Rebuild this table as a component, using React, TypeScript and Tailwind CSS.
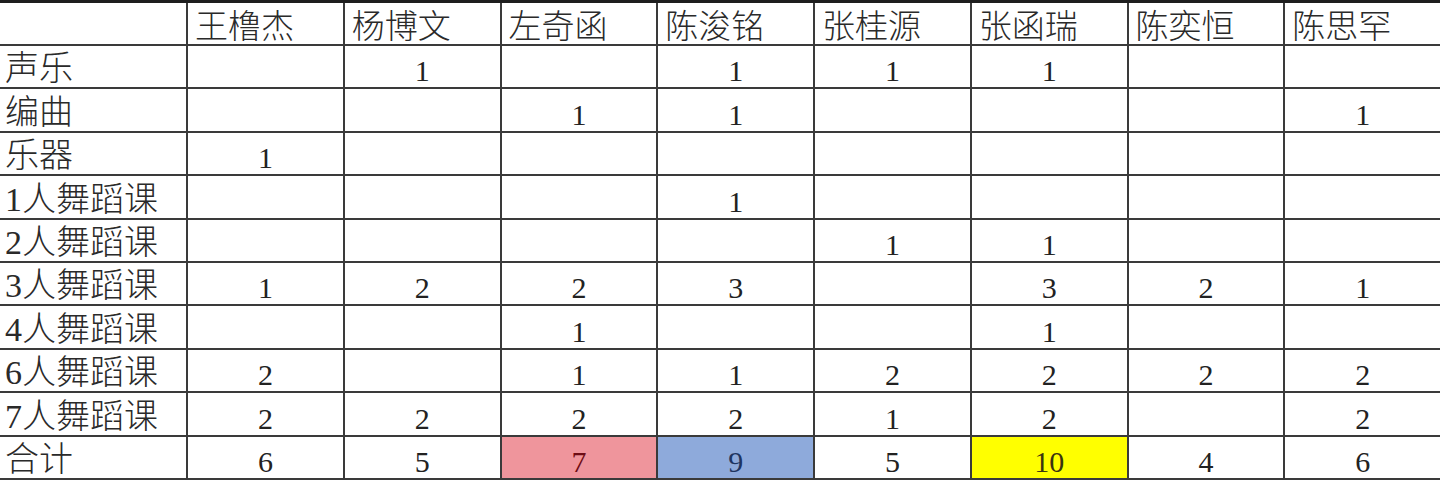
const names = ['王橹杰', '杨博文', '左奇函', '陈浚铭', '张桂源', '张函瑞', '陈奕恒', '陈思罕'];

type Row = { label: string; values: (number | null)[] };

const rows: Row[] = [
  { label: '声乐', values: [null, 1, null, 1, 1, 1, null, null] },
  { label: '编曲', values: [null, null, 1, 1, null, null, null, 1] },
  { label: '乐器', values: [1, null, null, null, null, null, null, null] },
  { label: '1人舞蹈课', values: [null, null, null, 1, null, null, null, null] },
  { label: '2人舞蹈课', values: [null, null, null, null, 1, 1, null, null] },
  { label: '3人舞蹈课', values: [1, 2, 2, 3, null, 3, 2, 1] },
  { label: '4人舞蹈课', values: [null, null, 1, null, null, 1, null, null] },
  { label: '6人舞蹈课', values: [2, null, 1, 1, 2, 2, 2, 2] },
  { label: '7人舞蹈课', values: [2, 2, 2, 2, 1, 2, null, 2] },
];

const totals = [6, 5, 7, 9, 5, 10, 4, 6];

// highlighted totals
const totalStyles = [
  'bg-white text-[#222]',
  'bg-white text-[#222]',
  'bg-[#ef959c] text-[#6e0c14]',
  'bg-[#8eaadb] text-[#1f3560]',
  'bg-white text-[#222]',
  'bg-[#ffff00] text-[#3a3410]',
  'bg-white text-[#222]',
  'bg-white text-[#222]',
];

const font = "font-['Liberation_Serif','Noto_Sans_CJK_SC',serif]";

const LabelCell = ({ text }: { text: string }) => (
  <div className="flex items-end bg-white pb-[1px] pl-[5px] text-[34px] leading-none font-light text-[#2a2a2a]">
    {text}
  </div>
);

const NumCell = ({ value, className = 'bg-white text-[#222]' }: { value: number | null; className?: string }) => (
  <div className={`flex items-end justify-center pb-[1px] text-[30px] leading-none ${className}`}>
    {value ?? ''}
  </div>
);

export default function App() {
  return (
    <div className={`h-[480px] w-[1440px] overflow-hidden bg-white ${font}`}>
      <div className="grid h-[480px] grid-cols-[186px_repeat(8,1fr)] grid-rows-[41px_repeat(10,1fr)] gap-[2px] border-t-[3px] border-[#1e1e1e] bg-[#3a3a3a] pb-[2px]">
        <div className="bg-white" />
        {names.map((n) => (
          <div
            key={n}
            className="flex items-end bg-white pl-[7px] text-[33px] leading-none font-light text-[#2a2a2a]"
          >
            {n}
          </div>
        ))}

        {rows.map((r) => (
          <div key={r.label} className="contents">
            <LabelCell text={r.label} />
            {r.values.map((v, i) => (
              <NumCell key={i} value={v} />
            ))}
          </div>
        ))}

        <LabelCell text="合计" />
        {totals.map((t, i) => (
          <NumCell key={i} value={t} className={totalStyles[i]} />
        ))}
      </div>
    </div>
  );
}
